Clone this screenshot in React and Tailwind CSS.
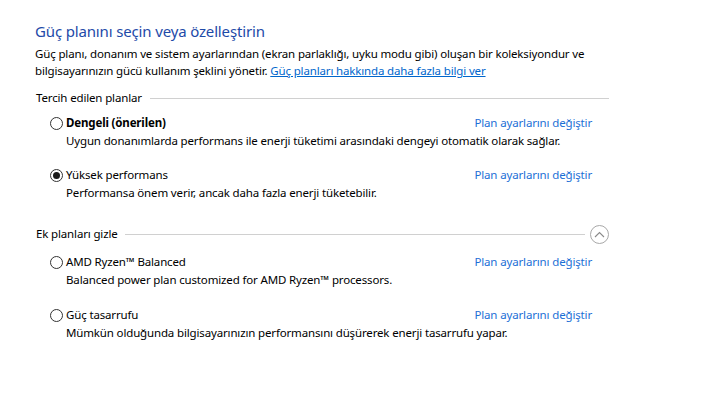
import React from "react";

const font = { fontFamily: '"Noto Sans", "Open Sans", sans-serif' };

function Radio({ checked }) {
  return (
    <span className="flex h-[13px] w-[13px] shrink-0 items-center justify-center rounded-full border border-[#333333] bg-white">
      {checked && <span className="h-[7px] w-[7px] rounded-full bg-[#1a1a1a]" />}
    </span>
  );
}

function Plan({ title, desc, checked, bold, className = "" }) {
  return (
    <div className={className}>
      <div className="flex h-[18px] items-center pl-[15px] pr-[17px]">
        <Radio checked={checked} />
        <span className={`ml-[3px] text-[11.5px] leading-[18px] tracking-[-0.15px] text-black ${bold ? "font-bold" : ""}`}>{title}</span>
        <span className="ml-auto text-[11.5px] leading-[18px] tracking-[-0.15px] text-[#1c6fd6]">Plan ayarlarını değiştir</span>
      </div>
      <div className="h-[18px] whitespace-nowrap pl-[31px] text-[11.5px] leading-[18px] tracking-[-0.15px] text-black">{desc}</div>
    </div>
  );
}

export default function App() {
  return (
    <div className="h-[395px] w-[702px] overflow-hidden bg-white pl-[35px] pt-[20px]" style={font}>
      <div className="w-[574px]">
        <div className="h-[22px] whitespace-nowrap text-[15px] leading-[22px] tracking-[-0.15px] text-[#1e4aa8]">Güç planını seçin veya özelleştirin</div>
        <p className="mt-[3px] whitespace-nowrap text-[11.5px] leading-[17px] tracking-[-0.15px] text-black">
          Güç planı, donanım ve sistem ayarlarından (ekran parlaklığı, uyku modu gibi) oluşan bir koleksiyondur ve
          <br />
          bilgisayarınızın gücü kullanım şeklini yönetir.{" "}
          <span className="text-[#0066cc] underline">Güç planları hakkında daha fazla bilgi ver</span>
        </p>

        <div className="mt-[10px] flex h-[18px] items-center">
          <span className="pl-[1px] text-[11.5px] leading-[18px] tracking-[-0.15px] text-black">Tercih edilen planlar</span>
          <span className="ml-[8px] h-px flex-1 bg-[#d0d0d0]" />
        </div>

        <Plan
          className="mt-[7px]"
          bold
          title="Dengeli (önerilen)"
          desc="Uygun donanımlarda performans ile enerji tüketimi arasındaki dengeyi otomatik olarak sağlar."
        />
        <Plan
          className="mt-[16px]"
          checked
          title="Yüksek performans"
          desc="Performansa önem verir, ancak daha fazla enerji tüketebilir."
        />

        <div className="mt-[23px] flex h-[18px] items-center">
          <span className="pl-[1px] text-[11.5px] leading-[18px] tracking-[-0.15px] text-black">Ek planları gizle</span>
          <span className="ml-[7px] h-px flex-1 bg-[#d0d0d0]" />
          <span className="ml-[5px] flex h-[19px] w-[19px] items-center justify-center rounded-full border border-[#a8a8a8]">
            <svg width="11" height="7" viewBox="0 0 11 7" fill="none">
              <path d="M1 6 L5.5 1.5 L10 6" stroke="#8a8a8a" strokeWidth="1.1" />
            </svg>
          </span>
        </div>

        <Plan
          className="mt-[10px]"
          title="AMD Ryzen™ Balanced"
          desc="Balanced power plan customized for AMD Ryzen™ processors."
        />
        <Plan
          className="mt-[17px]"
          title="Güç tasarrufu"
          desc="Mümkün olduğunda bilgisayarınızın performansını düşürerek enerji tasarrufu yapar."
        />
      </div>
    </div>
  );
}
